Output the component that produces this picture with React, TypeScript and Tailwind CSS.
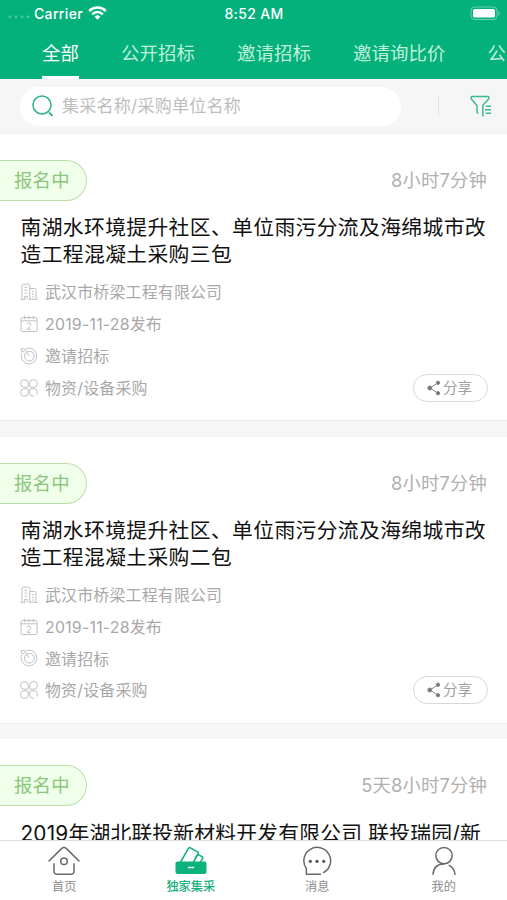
import type { ReactNode } from 'react'
import clsx from 'clsx'

type Tender = {
  id: number
  remaining: string
  title: string[]
  company: string
  date: string
}

const TABS = ['全部', '公开招标', '邀请招标', '邀请询比价', '公']

const TENDERS: Tender[] = [
  {
    id: 1,
    remaining: '8小时7分钟',
    title: ['南湖水环境提升社区、单位雨污分流及海绵城市改', '造工程混凝土采购三包'],
    company: '武汉市桥梁工程有限公司',
    date: '2019-11-28发布',
  },
  {
    id: 2,
    remaining: '8小时7分钟',
    title: ['南湖水环境提升社区、单位雨污分流及海绵城市改', '造工程混凝土采购二包'],
    company: '武汉市桥梁工程有限公司',
    date: '2019-11-28发布',
  },
]

const NEXT_TENDER = {
  remaining: '5天8小时7分钟',
  title: '2019年湖北联投新材料开发有限公司 联投瑞园/新',
}

function StatusBar() {
  return (
    <div className="grid h-[26px] grid-cols-[1fr_auto_1fr] items-center pl-2 pr-[5px] text-[14px] font-medium tracking-[0.35px]">
      <div className="flex items-center">
        <svg width="22" height="14" viewBox="0 0 22 14" fill="#fff" opacity="0.3">
          <circle cx="2" cy="10.8" r="1.4" />
          <circle cx="8" cy="10.8" r="1.4" />
          <circle cx="14" cy="10.8" r="1.4" />
          <circle cx="20" cy="10.8" r="1.4" />
        </svg>
        <span className="ml-1">Carrier</span>
        <svg className="ml-[5px]" width="19" height="14" viewBox="0 0 19 14" fill="none" stroke="#fff" strokeWidth="2.5">
          <path d="M1.2 5a11.8 11.8 0 0 1 16.6 0" />
          <path d="M4.2 8.3a7.5 7.5 0 0 1 10.6 0" />
          <path d="M9.5 13.8 6.6 10.8a4.1 4.1 0 0 1 5.8 0z" fill="#fff" stroke="none" />
        </svg>
      </div>
      <span className="-ml-[2px]">8:52 AM</span>
      <svg className="justify-self-end" width="32" height="15" viewBox="0 0 32 15">
        <rect x="1" y="1" width="26" height="12.5" rx="3.5" fill="none" stroke="#fff" strokeOpacity="0.4" />
        <rect x="3" y="3" width="22" height="8.5" rx="1.6" fill="#fff" />
        <path d="M28.5 5v4.5c1.4-.5 1.4-4 0-4.5z" fill="#fff" opacity="0.5" />
      </svg>
    </div>
  )
}

function Tabs() {
  return (
    <div className="flex h-[53px] gap-[42px] pl-[42px] text-[18.4px] tracking-[0.1px]">
      {TABS.map((tab, i) => (
        <div
          key={tab}
          className={clsx(
            'flex h-full shrink-0 items-center justify-center border-b-[3px] pt-[5px]',
            i === 0 ? 'border-white text-white' : 'border-transparent text-[#c0f0dc]'
          )}
        >
          {tab}
        </div>
      ))}
    </div>
  )
}

function SearchBar() {
  return (
    <div className="flex h-[55px] shrink-0 items-center border-b border-[#efefef] bg-[#f6f6f6] pl-5 pr-[15px]">
      <div className="flex h-[39px] w-[381px] items-center rounded-full bg-white pl-3">
        <svg width="22" height="22" viewBox="0 0 22 22" fill="none" stroke="#2fb389" strokeWidth="1.5">
          <circle cx="10" cy="10" r="9" />
          <path d="M17 17.5l3.6 3.4" strokeWidth="1.8" />
        </svg>
        <span className="ml-2 text-[17.1px] tracking-[0.18px] text-[#bdbdbd]">集采名称/采购单位名称</span>
      </div>
      <div className="ml-[37px] h-5 w-px bg-[#e4e4e4]" />
      <svg className="ml-auto" width="22" height="22" viewBox="0 0 22 22" fill="none" stroke="#3dba93" strokeWidth="1.5">
        <path d="M8.3 18.6q-1.3-.4-1.3-1.8v-6L1.6 4.2C.6 2.8 1 1.6 2.6 1.6h14.8c1.6 0 2 1.2 1 2.6l-5.6 6.1v11.2" />
        <path d="M15.8 11.2h5.2M14.8 14.7h6.2M15.8 18.2h5.2" />
      </svg>
    </div>
  )
}

const MetaSvg = ({ children }: { children: ReactNode }) => (
  <svg width="18" height="18" viewBox="0 0 18 18" fill="none" stroke="#c0c0c0" strokeWidth="1">
    {children}
  </svg>
)

const BuildingIcon = () => (
  <MetaSvg>
    <path d="M2 16V2.5Q2 1.2 3.3 1.2h5.2q1.3 0 1.3 1.3V16M9.8 5.5h4.9q1.3 0 1.3 1.3V16M.5 16.3h5M8.5 16.3h9" />
    <path d="M4.5 4.3h2.8M4.5 7.2h2.8M4.5 10.1h2.8M12 8.6h2M12 11.3h2M12 14h2M4.7 16v-2.7h2.5V16" />
  </MetaSvg>
)

const CalendarIcon = () => (
  <MetaSvg>
    <rect x="1" y="2.6" width="16" height="13.9" rx="1.3" />
    <path d="M1 5.8h16M4.7.8v3.4M9 .8v3.4M13.3.8v3.4" />
    <path d="M7 9.4q.3-1.5 1.9-1.5 1.8 0 1.8 1.6 0 .9-1.3 2.3l-2.3 2.5h3.9" />
  </MetaSvg>
)

const TargetIcon = () => (
  <MetaSvg>
    <path d="M4.6 2.5a7.8 7.8 0 1 1-2.8 3.4" />
    <circle cx="9.3" cy="9.2" r="4.9" />
    <path d="M1 1.8h3l5.2 7M1 1.8l.6 2.6 2.6.5" />
  </MetaSvg>
)

const ClusterIcon = () => (
  <MetaSvg>
    <path d="M3.8.8h1.4a3 3 0 0 1 3 3v3.2a1.2 1.2 0 0 1-1.2 1.2H3.8a3 3 0 0 1-3-3V3.8a3 3 0 0 1 3-3z" />
    <path d="M12.8.8h1.4a3 3 0 0 1 3 3v1.4a3 3 0 0 1-3 3H11a1.2 1.2 0 0 1-1.2-1.2V3.8a3 3 0 0 1 3-3z" />
    <path d="M3.8 9.8H7A1.2 1.2 0 0 1 8.2 11v3.2a3 3 0 0 1-3 3H3.8a3 3 0 0 1-3-3v-1.4a3 3 0 0 1 3-3z" />
    <path d="M14 17.2h-1.2a3 3 0 0 1-3-3V11A1.2 1.2 0 0 1 11 9.8h3.2a3 3 0 0 1 3 3v2.7" />
  </MetaSvg>
)

function MetaRow({ icon, children }: { icon: ReactNode; children: ReactNode }) {
  return (
    <div className="flex h-[31.8px] items-center gap-[7.5px] text-[15.9px] tracking-[0.22px] text-[#a8a8a8]">
      {icon}
      <span className="pt-[2px]">{children}</span>
    </div>
  )
}

function StatusRow({ remaining }: { remaining: string }) {
  return (
    <div className="flex items-center justify-between pr-5">
      <div className="flex h-[41px] w-[87px] items-center rounded-r-full border border-l-0 border-[#b9dfa9] bg-[#efffe9] pl-[14px] pt-px text-[18.4px] tracking-[0.2px] text-[#8bc57d]">
        报名中
      </div>
      <span className="pt-px text-[18.3px] tracking-[0.2px] text-[#b0b0b0]">{remaining}</span>
    </div>
  )
}

function TenderCard({ tender }: { tender: Tender }) {
  return (
    <article className="h-[287px] shrink-0 border-b border-[#ececec] bg-white pt-[26px]">
      <StatusRow remaining={tender.remaining} />
      <h2 className="mt-[13px] pl-[20.5px] text-[20.8px] leading-[27px] tracking-[0.36px] text-[#111]">
        {tender.title.map((line) => (
          <span key={line} className="block whitespace-nowrap">{line}</span>
        ))}
      </h2>
      <div className="mt-[8.5px] flex items-end justify-between pl-[19.5px] pr-[19px]">
        <div>
          <MetaRow icon={<BuildingIcon />}>{tender.company}</MetaRow>
          <MetaRow icon={<CalendarIcon />}>{tender.date}</MetaRow>
          <MetaRow icon={<TargetIcon />}>邀请招标</MetaRow>
          <MetaRow icon={<ClusterIcon />}>物资/设备采购</MetaRow>
        </div>
        <button type="button" className="mb-[2px] flex h-7 w-[75px] items-center justify-center gap-[2px] rounded-full border border-[#d8d8d8] pr-[2px] text-[14.6px] text-[#a0a0a0]">
          <svg width="14" height="16" viewBox="0 0 14 16" fill="#777" stroke="#888">
            <path d="M11 2.8 3 8l8 5.2" fill="none" />
            <circle cx="11" cy="2.8" r="1.7" />
            <circle cx="2.8" cy="8" r="2" />
            <circle cx="11" cy="13.2" r="1.7" />
          </svg>
          <span className="pt-[2px]">分享</span>
        </button>
      </div>
    </article>
  )
}

const NavSvg = ({ children }: { children: ReactNode }) => (
  <svg width="34" height="30" viewBox="0 0 34 30" fill="none" stroke="#686868" strokeWidth="1.5" strokeLinecap="round" strokeLinejoin="round">
    {children}
  </svg>
)

const NAV_ITEMS = [
  {
    label: '首页',
    icon: (
      <NavSvg>
        <path d="M2 15 14.5 2.6q2.5-2 5 0L32 15" />
        <path d="M7 17.8v7.2q0 3.3 3.3 3.3h13.4q3.3 0 3.3-3.3v-7.2" />
        <circle cx="17" cy="15.3" r="3.3" />
      </NavSvg>
    ),
  },
  {
    label: '独家集采',
    icon: (
      <NavSvg>
        <path d="M6.6 16 14.6 2.2q.8-1 1.8-.4l7.6 4.4q.8.6.3 1.5L19.5 16M21.5 11.5l2.4-3.2 4.6 2.7q.8.6.3 1.4L26.5 16" stroke="#0cb17b" />
        <path d="M3.5 15.6h27q2 0 2 2v8q0 2.5-2.5 2.5H4q-2.5 0-2.5-2.5v-8q0-2 2-2z" fill="#0cb17b" stroke="none" />
        <path d="M14.8 21.5h4.6" stroke="#fff" strokeWidth="1.7" />
      </NavSvg>
    ),
  },
  {
    label: '消息',
    icon: (
      <NavSvg>
        <path d="M20.5 28.3H6.3v-5.8A13.4 13.4 0 1 1 23.7 26.5" />
        <g fill="#555" stroke="none">
          <circle cx="10.3" cy="15.3" r="1.6" />
          <circle cx="17" cy="15.3" r="1.6" />
          <circle cx="23.7" cy="15.3" r="1.6" />
        </g>
      </NavSvg>
    ),
  },
  {
    label: '我的',
    icon: (
      <NavSvg>
        <circle cx="17" cy="9.6" r="8.2" />
        <path d="M6 28.3c.5-6.5 4.5-10.4 11-10.4M22.2 19.4c3.5 2 5.4 5 5.8 8.9" />
      </NavSvg>
    ),
  },
]

function BottomNav() {
  return (
    <nav className="grid h-[60px] shrink-0 grid-cols-4 border-t border-[#dedede] bg-white pl-px">
      {NAV_ITEMS.map((item, i) => (
        <div
          key={item.label}
          className={clsx(
            'flex flex-col items-center pt-[5px] text-[12.2px] leading-[18px]',
            i === 1 ? 'font-medium text-[#17b17e]' : 'text-[#8d8d8d]'
          )}
        >
          {item.icon}
          <span className="mt-[2px]">{item.label}</span>
        </div>
      ))}
    </nav>
  )
}

export default function App() {
  return (
    <div className="flex h-[900px] w-[507px] flex-col overflow-hidden bg-white font-['Inter','Noto_Sans_CJK_SC',sans-serif]">
      <header className="shrink-0 bg-[#04b17b] text-white">
        <StatusBar />
        <Tabs />
      </header>
      <SearchBar />
      <main className="flex min-h-0 flex-1 flex-col gap-[15.5px] overflow-hidden bg-[#f6f6f6]">
        {TENDERS.map((tender) => (
          <TenderCard key={tender.id} tender={tender} />
        ))}
        <article className="shrink-0 bg-white pt-[26px]">
          <StatusRow remaining={NEXT_TENDER.remaining} />
          <h2 className="mt-[13.5px] whitespace-nowrap pl-[20.5px] text-[20.8px] leading-[27px] tracking-[0.19px] text-[#111]">
            {NEXT_TENDER.title}
          </h2>
        </article>
      </main>
      <BottomNav />
    </div>
  )
}
